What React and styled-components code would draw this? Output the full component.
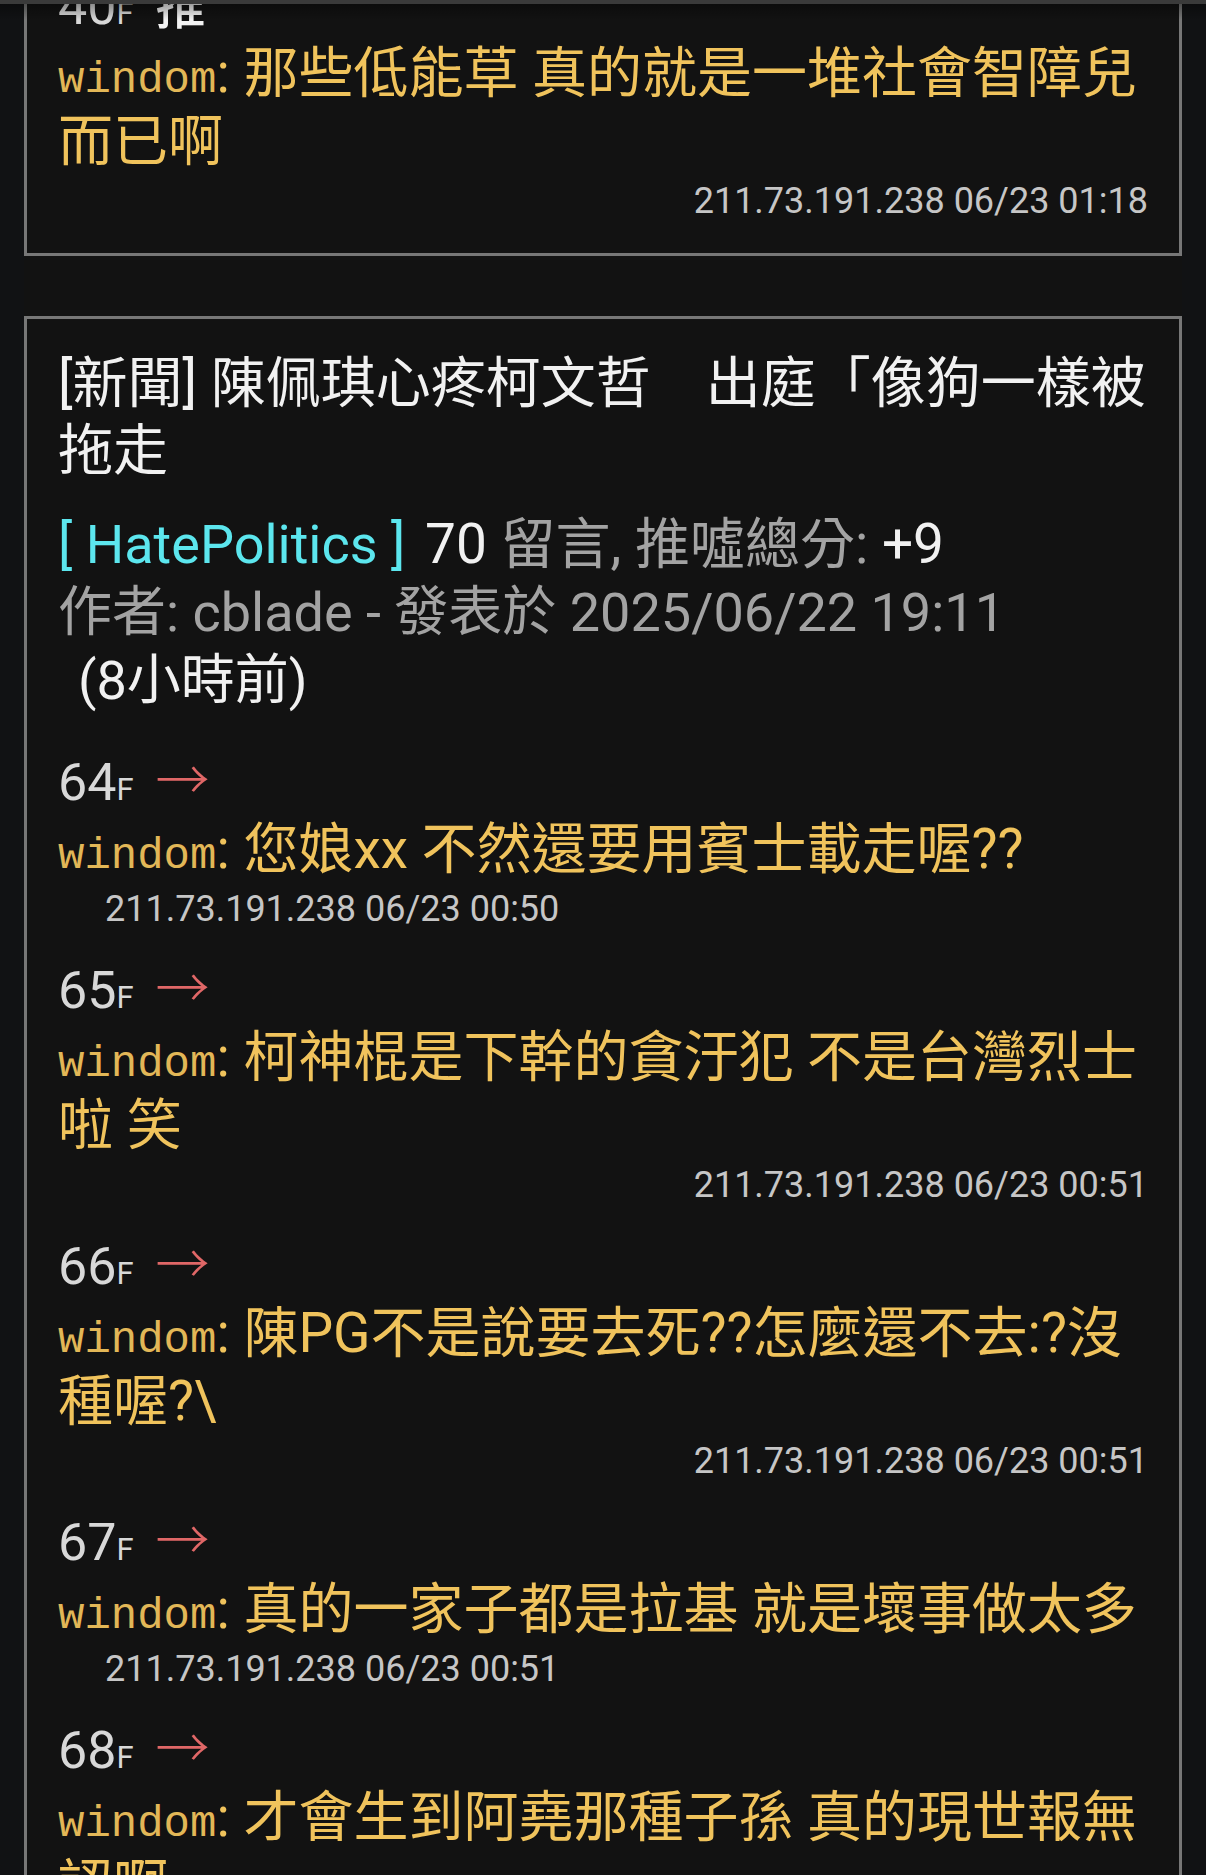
import React from "react";
import styled, { createGlobalStyle } from "styled-components";

const GlobalStyle = createGlobalStyle`
  html, body {
    margin: 0;
    padding: 0;
    background: #111214;
  }
  body {
    font-family: Roboto, "Noto Sans CJK TC", sans-serif;
    -webkit-font-smoothing: antialiased;
  }
  * { box-sizing: border-box; }
`;

const Screen = styled.div`
  width: 1206px;
  height: 1875px;
  display: flex;
  flex-direction: column;
  overflow: hidden;
  background: #111214;
`;

const TopEdge = styled.div`
  flex: none;
  height: 4px;
  background: #3a3a3a;
`;

const Viewport = styled.div`
  position: relative;
  flex: 1;
  overflow: hidden;
`;

const EdgeFade = styled.div`
  position: absolute;
  top: 0;
  left: 0;
  right: 0;
  height: 16px;
  background: linear-gradient(rgba(0, 0, 0, 0.35), rgba(0, 0, 0, 0));
  pointer-events: none;
`;

const Feed = styled.div`
  margin: ${(p) => -p.$scroll}px 24px 0;
  display: flex;
  flex-direction: column;
  gap: 60px;
  background: #121212;
`;

const Card = styled.article`
  border: 3px solid #777777;
  background: #121212;
  padding: 31px 20px 26px 31px;
`;

const Title = styled.h2`
  margin: 0;
  font-weight: 400;
  font-size: 55px;
  line-height: 67px;
  color: #f1f1f1;
`;

const Meta = styled.div`
  margin-top: 27px;
  font-size: 54px;
  line-height: 68px;
  color: #a3a3a3;
`;

const MetaLine = styled.div``;

const Board = styled.span`
  color: #5ce6ee;
  margin-right: 6px;
`;

const Stats = styled.span`
  font-size: 55px;
  line-height: 1;
`;

const Bright = styled.span`
  color: #f1f1f1;
`;

const Ago = styled.span`
  display: inline-block;
  white-space: nowrap;
  margin-left: 20px;
  color: #f1f1f1;
`;

const CommentList = styled.div`
  margin-top: ${(p) => (p.$first ? "0" : "30px")};
  display: flex;
  flex-direction: column;
  gap: 18px;
`;

const Comment = styled.div``;

const FloorRow = styled.div`
  height: 70px;
  line-height: 76px;
  font-size: 52px;
  color: #d8d8d8;
  white-space: nowrap;
`;

const FloorNum = styled.span``;

const FloorMark = styled.span`
  font-size: 31px;
  line-height: 0;
`;

const Tag = styled.span`
  margin-left: 22px;
  line-height: 0;
  font-family: "Noto Sans CJK TC", sans-serif;
  font-size: ${(p) => (p.$kind === "push" ? "50px" : "54px")};
  color: ${(p) => (p.$kind === "push" ? "#f3f3f3" : "#e06767")};
  font-weight: ${(p) => (p.$kind === "push" ? 500 : 300)};
`;

const Content = styled.p`
  margin: 0;
  font-size: 55px;
  line-height: 68px;
  color: #f0c35c;
`;

const Author = styled.span`
  font-family: "Liberation Mono", "DejaVu Sans Mono", monospace;
  font-size: 44px;
  line-height: 1;
  color: #e2b757;
`;

const Stamp = styled.div`
  font-size: 36px;
  line-height: 52px;
  color: #c6c6c6;
  white-space: nowrap;
  text-align: ${(p) => (p.$align === "right" ? "right" : "left")};
  padding-left: ${(p) => (p.$align === "right" ? "0" : "47px")};
  padding-right: ${(p) => (p.$align === "right" ? "11px" : "0")};
`;

const TAGS = { "→": "arrow", "推": "push" };

function PushComment({ floor, tag, user, text, time, align }) {
  return (
    <Comment>
      <FloorRow>
        <FloorNum>{floor}</FloorNum>
        <FloorMark>F</FloorMark>
        <Tag $kind={TAGS[tag]}>{tag}</Tag>
      </FloorRow>
      <Content>
        <Author>{user}</Author>: {text}
      </Content>
      <Stamp $align={align}>{time}</Stamp>
    </Comment>
  );
}

const firstCard = [
  {
    floor: "40",
    tag: "推",
    user: "windom",
    text: "那些低能草 真的就是一堆社會智障兒而已啊",
    time: "211.73.191.238 06/23 01:18",
    align: "right",
  },
];

const secondCard = [
  {
    floor: "64",
    tag: "→",
    user: "windom",
    text: "您娘xx 不然還要用賓士載走喔??",
    time: "211.73.191.238 06/23 00:50",
    align: "left",
  },
  {
    floor: "65",
    tag: "→",
    user: "windom",
    text: "柯神棍是下幹的貪汙犯 不是台灣烈士啦 笑",
    time: "211.73.191.238 06/23 00:51",
    align: "right",
  },
  {
    floor: "66",
    tag: "→",
    user: "windom",
    text: "陳PG不是說要去死??怎麼還不去:?沒種喔?\\",
    time: "211.73.191.238 06/23 00:51",
    align: "right",
  },
  {
    floor: "67",
    tag: "→",
    user: "windom",
    text: "真的一家子都是拉基 就是壞事做太多",
    time: "211.73.191.238 06/23 00:51",
    align: "left",
  },
  {
    floor: "68",
    tag: "→",
    user: "windom",
    text: "才會生到阿堯那種子孫 真的現世報無認啊",
    time: "211.73.191.238 06/23 00:52",
    align: "right",
  },
];

export default function App() {
  return (
    <>
      <GlobalStyle />
      <Screen>
        <TopEdge />
        <Viewport>
          <Feed $scroll={69}>
            <Card>
              <CommentList $first>
                {firstCard.map((c, i) => (
                  <PushComment key={i} {...c} />
                ))}
              </CommentList>
            </Card>
            <Card>
              <Title>[新聞] 陳佩琪心疼柯文哲　出庭「像狗一樣被拖走</Title>
              <Meta>
                <MetaLine>
                  <Board>[ HatePolitics ]</Board>
                  <Stats>
                    {" "}
                    <Bright>70</Bright> 留言, 推噓總分: <Bright>+9</Bright>
                  </Stats>
                </MetaLine>
                <MetaLine>
                  作者: cblade - 發表於 2025/06/22 19:11 <Ago>(8小時前)</Ago>
                </MetaLine>
              </Meta>
              <CommentList>
                {secondCard.map((c, i) => (
                  <PushComment key={i} {...c} />
                ))}
              </CommentList>
            </Card>
          </Feed>
          <EdgeFade />
        </Viewport>
      </Screen>
    </>
  );
}
